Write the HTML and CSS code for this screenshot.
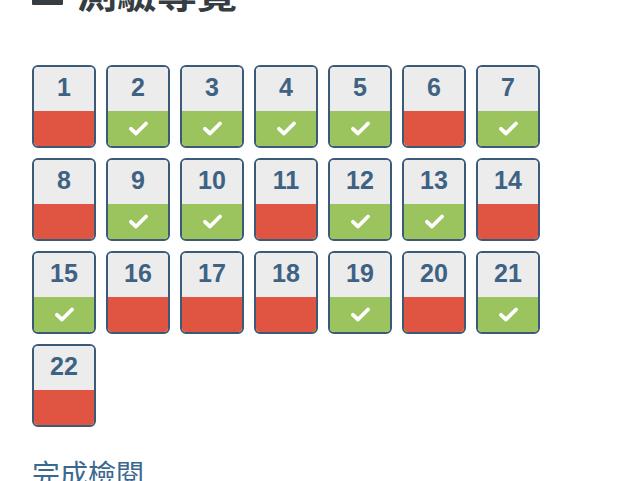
FILE: index.html
```html
<!DOCTYPE html>
<html>
<head>
<meta charset="utf-8">
<title>測驗導覽</title>
<link rel="stylesheet" href="styles.css">
</head>
<body>
<div class="page">
	<h2 class="title"><span class="bars"><i></i><i></i><i></i></span>測驗導覽</h2>

	<div class="nav" id="nav"></div>

	<a href="#" class="finish">完成檢閱</a>
</div>
<script type="text/javascript">
	// 1 = correct, 0 = wrong
	var answers = [0,1,1,1,1,0,1, 0,1,1,0,1,1,0, 1,0,0,0,1,0,1, 0];
	var nav = document.getElementById('nav');
	for (var i = 0; i < answers.length; i++) {
		var btn = document.createElement('a');
		btn.href = '#';
		btn.className = 'qbtn ' + (answers[i] ? 'right' : 'wrong');
		btn.innerHTML = '<span class="num">' + (i + 1) + '</span>' +
			'<span class="state">' + (answers[i] ? '<svg width="19" height="15" viewBox="0 0 19 15"><path d="M2 7.8 L7 12.5 L17 2.5" fill="none" stroke="#fff" stroke-width="3.8" stroke-linecap="round" stroke-linejoin="round"/></svg>' : '') + '</span>';
		nav.appendChild(btn);
	}
</script>
</body>
</html>
```
FILE: styles.css
```css
*{
	margin: 0;
	padding: 0;
	text-decoration: none;
}
body{
	background: #fff;
	font-family: "Liberation Sans", "Noto Sans CJK TC", sans-serif;
}
.page{
	padding-left: 32px;
}
.title{
	display: flex;
	align-items: flex-end;
	margin-top: -29px;
	height: 40px;
	font-size: 40px;
	line-height: 40px;
	font-weight: bold;
	color: #353c42;
	font-family: "Noto Sans CJK TC", sans-serif;
}
.bars{
	display: flex;
	flex-direction: column;
	justify-content: space-between;
	width: 31px;
	height: 26px;
	margin-right: 14px;
	margin-bottom: 6px;
}
.bars i{
	display: block;
	height: 6px;
	background: #353c42;
	border-radius: 1px;
}
.nav{
	display: grid;
	grid-template-columns: repeat(7, 64px);
	gap: 10px;
	margin-top: 54px;
}
.qbtn{
	display: flex;
	flex-direction: column;
	height: 83px;
	border: 2px solid #3a5a78;
	border-radius: 6px;
	overflow: hidden;
	box-sizing: border-box;
}
.num{
	height: 44px;
	background: #ececec;
	color: #3e6283;
	font-size: 25px;
	font-weight: bold;
	line-height: 41px;
	text-align: center;
}
.state{
	flex: 1;
	display: flex;
	align-items: center;
	justify-content: center;
}
.right .state{
	background: #9bc45e;
}
.wrong .state{
	background: #e05542;
}
.finish{
	display: inline-block;
	margin-top: 26px;
	font-size: 28px;
	color: #3b6890;
	font-family: "Noto Sans CJK TC", sans-serif;
}
```
